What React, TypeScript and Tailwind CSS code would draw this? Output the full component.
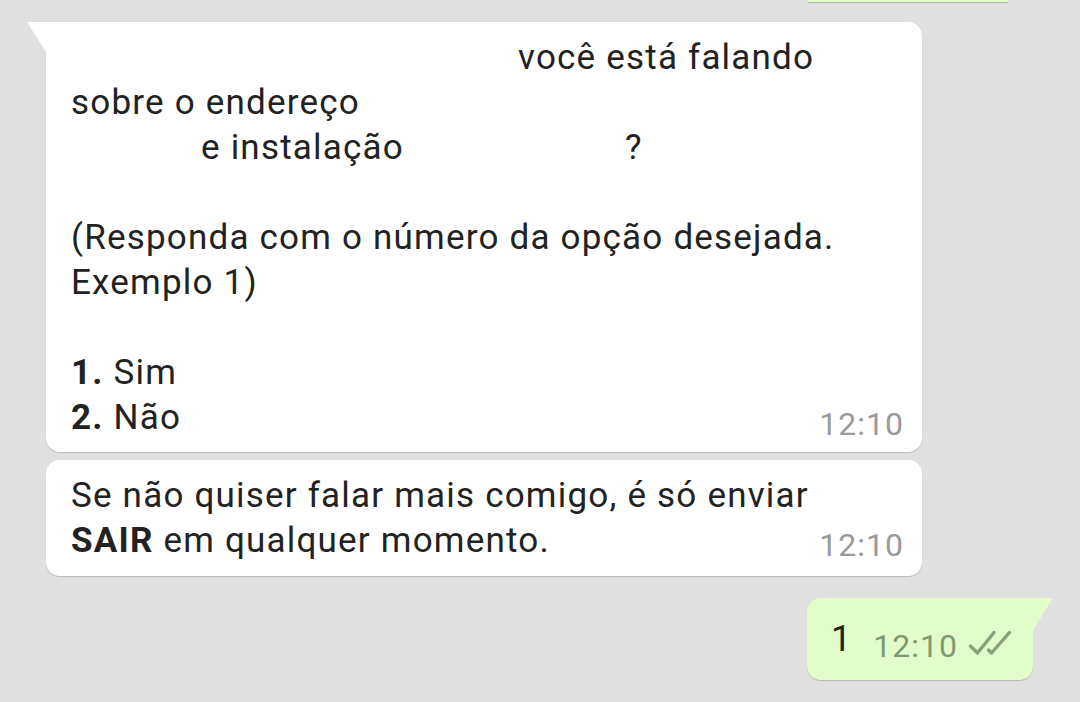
import React from 'react';

const FONT = { fontFamily: 'Roboto, "Noto Sans", Arial, sans-serif' };

function Time({ children, className = '' }: { children: React.ReactNode; className?: string }) {
  return <span className={`text-[32px] leading-none tracking-[1px] text-[#9a9a9a] ${className}`}>{children}</span>;
}

function DoubleCheck() {
  return (
    <svg width="44" height="26" viewBox="0 0 44 26" fill="none" className="mb-[6px] ml-[10px]">
      <path d="M2.5 16 L9.5 23 L26 2.5" stroke="#86a27b" strokeWidth="3.4" strokeLinecap="round" strokeLinejoin="round" />
      <path d="M20.5 20 L23.5 23 L41.5 2.5" stroke="#86a27b" strokeWidth="3.4" strokeLinecap="round" strokeLinejoin="round" />
    </svg>
  );
}

export default function App() {
  return (
    <div style={FONT} className="w-[1080px] h-[702px] overflow-hidden bg-[#e0e0e0] text-[#222222] flex flex-col">
      {/* tail end of the previous outgoing bubble */}
      <div className="ml-[808px] w-[200px] h-[2px] bg-[#e2fdc9] shadow-[0_1px_1px_rgba(0,0,0,0.2)]" />

      {/* incoming message 1 */}
      <div className="relative mt-[20px] ml-[46px] w-[876px] bg-white rounded-[14px] rounded-tl-none shadow-[0_1px_1px_rgba(0,0,0,0.18)] pl-[25px] pr-[18px] pt-[13px] pb-[12px]">
        <span className="absolute left-[-19px] top-0 w-0 h-0 border-t-[30px] border-t-white border-l-[19px] border-l-transparent" />
        <div className="grid">
          <div className="col-start-1 row-start-1 text-[35px] leading-[45px] tracking-[1.2px]">
            <div><span className="inline-block w-[447px]" />você está falando</div>
            <div>sobre o endereço</div>
            <div className="pl-[130px]">e instalação<span className="ml-[221px]">?</span></div>
            <div>&nbsp;</div>
            <div>(Responda com o número da opção desejada.</div>
            <div>Exemplo 1)</div>
            <div>&nbsp;</div>
            <div><b className="font-bold">1.</b> Sim</div>
            <div><b className="font-bold">2.</b> Não</div>
          </div>
          <Time className="col-start-1 row-start-1 self-end justify-self-end">12:10</Time>
        </div>
      </div>

      {/* incoming message 2 */}
      <div className="mt-[8px] ml-[46px] w-[876px] bg-white rounded-[14px] shadow-[0_1px_1px_rgba(0,0,0,0.18)] pl-[25px] pr-[18px] pt-[13px] pb-[13px]">
        <div className="grid">
          <div className="col-start-1 row-start-1 text-[35px] leading-[45px] tracking-[1.2px]">
            <div>Se não quiser falar mais comigo, é só enviar</div>
            <div><b className="font-bold">SAIR</b> em qualquer momento.</div>
          </div>
          <Time className="col-start-1 row-start-1 self-end justify-self-end mb-[2px]">12:10</Time>
        </div>
      </div>

      {/* outgoing message */}
      <div className="relative mt-[22px] ml-[807px] w-[226px] bg-[#e2fdc9] rounded-[14px] rounded-tr-none shadow-[0_1px_1px_rgba(0,0,0,0.18)] pl-[24px] pt-[19px] pb-[18px] flex items-end">
        <span className="absolute right-[-20px] top-0 w-0 h-0 border-t-[32px] border-t-[#e2fdc9] border-r-[20px] border-r-transparent" />
        <span className="text-[36px] leading-[45px] text-[#182614]">1</span>
        <Time className="ml-[22px] !text-[#7d9b72]">12:10</Time>
        <DoubleCheck />
      </div>
    </div>
  );
}
